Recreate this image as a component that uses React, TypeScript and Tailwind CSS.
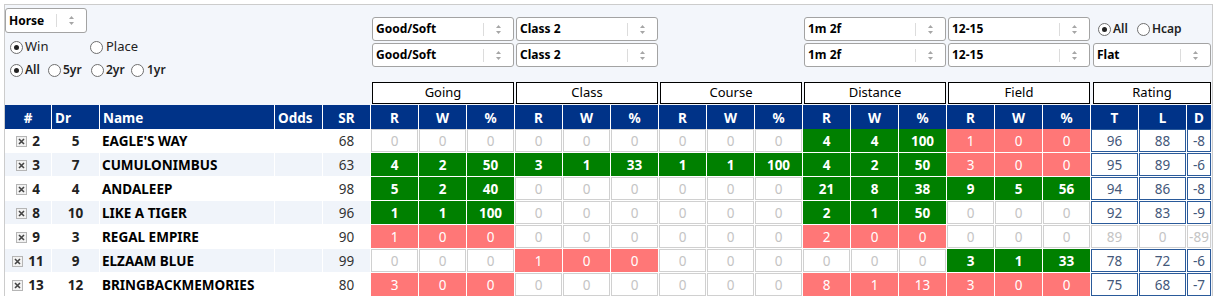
type Stat = [number, number, number];

type Row = {
  n: number;
  dr: number;
  name: string;
  sr: number;
  stats: Stat[];
  t: number;
  l: number;
  d: number;
  dim?: boolean;
};

const rows: Row[] = [
  { n: 2, dr: 5, name: "EAGLE'S WAY", sr: 68, stats: [[0, 0, 0], [0, 0, 0], [0, 0, 0], [4, 4, 100], [1, 0, 0]], t: 96, l: 88, d: -8 },
  { n: 3, dr: 7, name: "CUMULONIMBUS", sr: 63, stats: [[4, 2, 50], [3, 1, 33], [1, 1, 100], [4, 2, 50], [3, 0, 0]], t: 95, l: 89, d: -6 },
  { n: 4, dr: 4, name: "ANDALEEP", sr: 98, stats: [[5, 2, 40], [0, 0, 0], [0, 0, 0], [21, 8, 38], [9, 5, 56]], t: 94, l: 86, d: -8 },
  { n: 8, dr: 10, name: "LIKE A TIGER", sr: 96, stats: [[1, 1, 100], [0, 0, 0], [0, 0, 0], [2, 1, 50], [0, 0, 0]], t: 92, l: 83, d: -9 },
  { n: 9, dr: 3, name: "REGAL EMPIRE", sr: 90, stats: [[1, 0, 0], [0, 0, 0], [0, 0, 0], [2, 0, 0], [0, 0, 0]], t: 89, l: 0, d: -89, dim: true },
  { n: 11, dr: 9, name: "ELZAAM BLUE", sr: 99, stats: [[0, 0, 0], [1, 0, 0], [0, 0, 0], [0, 0, 0], [3, 1, 33]], t: 78, l: 72, d: -6 },
  { n: 13, dr: 12, name: "BRINGBACKMEMORIES", sr: 80, stats: [[3, 0, 0], [0, 0, 0], [0, 0, 0], [8, 1, 13], [3, 0, 0]], t: 75, l: 68, d: -7 },
];

const groups = ["Going", "Class", "Course", "Distance", "Field"];

const Arrows = () => (
  <svg width="7" height="11" viewBox="0 0 7 11">
    <path d="M3.5 1 L6 4 L1 4 Z" fill="#a6a6a6" />
    <path d="M3.5 10 L6 7 L1 7 Z" fill="#a6a6a6" />
  </svg>
);

const Select = ({ value, className = "" }: { value: string; className?: string }) => (
  <div className={`flex items-center rounded-[3px] border border-[#a3a3a3] bg-white ${className}`}>
    <span className="flex-1 pl-[3px] text-[12px] font-bold text-black">{value}</span>
    <span className="h-[13px] w-px bg-[#dcdcdc]" />
    <span className="flex w-[29px] justify-center">
      <Arrows />
    </span>
  </div>
);

const Radio = ({ checked }: { checked?: boolean }) => (
  <span className="inline-flex h-[13px] w-[13px] shrink-0 items-center justify-center rounded-full border border-[#6f6f6f] bg-white">
    {checked && <span className="h-[5px] w-[5px] rounded-full bg-[#222]" />}
  </span>
);

const CheckX = () => (
  <span className="inline-flex h-[11px] w-[11px] items-center justify-center border border-[#b5b5b5] bg-[#f2f2f2]">
    <svg width="7" height="7" viewBox="0 0 7 7">
      <path d="M1 1 L6 6 M6 1 L1 6" stroke="#444" strokeWidth="1.6" />
    </svg>
  </span>
);

const StatCell = ({ value, kind }: { value: number; kind: "zero" | "good" | "bad" }) => {
  if (kind === "good")
    return <div className="flex items-center justify-center bg-[#008000] pt-[2px] font-bold text-white">{value}</div>;
  if (kind === "bad")
    return <div className="flex items-center justify-center bg-[#ff7777] pt-[2px] text-white">{value}</div>;
  return (
    <div className="flex items-center justify-center border border-[#d0d0d0] bg-white pt-[2px] text-[#c4c4c4]">{value}</div>
  );
};

const kindOf = (s: Stat): "zero" | "good" | "bad" => {
  if (s[0] === 0) return "zero";
  return s[2] >= 20 ? "good" : "bad";
};

export default function App() {
  return (
    <div className="ml-1 mt-1 w-[1209px] border-x border-t border-[#cccccc] bg-[#f3f6fb] text-[13px] font-['Noto_Sans',sans-serif] text-[#222]">
      <div className="flex h-[100px]">
        <div className="flex w-[366px] flex-col">
          <Select value="Horse" className="mt-[3px] h-[25px] w-[82px]" />
          <div className="mt-[7px] flex h-[14px] items-center pl-[5px]">
            <span className="flex w-[80px] items-center gap-[2px]">
              <Radio checked />
              <span>Win</span>
            </span>
            <span className="flex items-center gap-[3px]">
              <Radio />
              <span>Place</span>
            </span>
          </div>
          <div className="mt-[9px] flex h-[14px] items-center pl-[5px] text-[12px] font-semibold">
            <span className="flex w-[38px] items-center gap-[2px]">
              <Radio checked />
              <span>All</span>
            </span>
            <span className="flex w-[43px] items-center gap-[2px]">
              <Radio />
              <span>5yr</span>
            </span>
            <span className="flex w-[40px] items-center gap-[2px]">
              <Radio />
              <span>2yr</span>
            </span>
            <span className="flex items-center gap-[3px]">
              <Radio />
              <span>1yr</span>
            </span>
          </div>
        </div>
        <div className="flex flex-1 flex-col pt-[12px]">
          <div className="grid grid-cols-[144px_144px_144px_144px_144px_120px] gap-y-[2px]">
            <Select value="Good/Soft" className="mx-px h-[24px]" />
            <Select value="Class 2" className="mx-px h-[24px]" />
            <div />
            <Select value="1m 2f" className="mx-px h-[24px]" />
            <Select value="12-15" className="mx-px h-[24px]" />
            <div className="flex items-center pl-[7px] text-[12px] font-semibold">
              <span className="flex w-[39px] items-center gap-[2px]">
                <Radio checked />
                <span>All</span>
              </span>
              <span className="flex items-center gap-[2px]">
                <Radio />
                <span>Hcap</span>
              </span>
            </div>
            <Select value="Good/Soft" className="mx-px h-[24px]" />
            <Select value="Class 2" className="mx-px h-[24px]" />
            <div />
            <Select value="1m 2f" className="mx-px h-[24px]" />
            <Select value="12-15" className="mx-px h-[24px]" />
            <Select value="Flat" className="ml-[2px] h-[24px]" />
          </div>
          <div className="mt-[15px] grid grid-cols-[144px_144px_144px_144px_144px_120px]">
            {groups.map((g) => (
              <div key={g} className="mx-px flex h-[22px] items-center justify-center border border-black bg-white text-[13px] text-black">
                {g}
              </div>
            ))}
            <div className="ml-[2px] flex h-[22px] items-center justify-center border border-black bg-white text-[13px] text-black">
              Rating
            </div>
          </div>
        </div>
      </div>

      <div className="grid w-[1206px] grid-cols-[46px_47px_174px_47px_47px_repeat(15,47px)_47px_47px_24px] auto-rows-[23px] gap-px bg-white text-[13.5px]">
        <div className="flex h-[25px] items-center justify-center bg-[#003388] pt-px font-bold text-white">#</div>
        <div className="flex h-[25px] items-center bg-[#003388] pl-[3px] pt-px font-bold text-white">Dr</div>
        <div className="flex h-[25px] items-center bg-[#003388] pl-[3px] pt-px font-bold text-white">Name</div>
        <div className="flex h-[25px] items-center bg-[#003388] pl-[3px] pt-px font-bold text-white">Odds</div>
        <div className="flex h-[25px] items-center justify-center bg-[#003388] pt-px font-bold text-white">SR</div>
        {groups.map((g) =>
          ["R", "W", "%"].map((h) => (
            <div key={g + h} className="flex h-[25px] items-center justify-center bg-[#003388] pt-px font-bold text-white">
              {h}
            </div>
          ))
        )}
        <div className="flex h-[25px] items-center justify-center bg-[#003388] pt-px font-bold text-white">T</div>
        <div className="flex h-[25px] items-center justify-center bg-[#003388] pt-px font-bold text-white">L</div>
        <div className="flex h-[25px] items-center justify-center bg-[#003388] pt-px font-bold text-white">D</div>

        {rows.map((r, i) => {
          const bg = i % 2 === 0 ? "bg-white" : "bg-[#f0f4fa]";
          const rate = r.dim
            ? "border-[#d0d0d0] text-[#c4c4c4]"
            : "border-[#2a5a9a] text-[#44587a]";
          return [
            <div key={`a${i}`} className={`${bg} flex items-center justify-center gap-[5px] pt-[2px] font-bold`}>
              <CheckX />
              <span>{r.n}</span>
            </div>,
            <div key={`b${i}`} className={`${bg} flex items-center justify-center pt-[2px] font-bold`}>{r.dr}</div>,
            <div key={`c${i}`} className={`${bg} flex items-center pl-[2px] pt-[2px] font-bold text-black`}>{r.name}</div>,
            <div key={`d${i}`} className={bg} />,
            <div key={`e${i}`} className={`${bg} flex items-center justify-center pt-[2px] text-[#333]`}>{r.sr}</div>,
            ...r.stats.flatMap((s, gi) =>
              s.map((v, vi) => <StatCell key={`s${i}-${gi}-${vi}`} value={v} kind={kindOf(s)} />)
            ),
            <div key={`t${i}`} className={`flex items-center justify-center border bg-white pt-[2px] ${rate}`}>{r.t}</div>,
            <div key={`l${i}`} className={`flex items-center justify-center border bg-white pt-[2px] ${rate}`}>{r.l}</div>,
            <div key={`x${i}`} className={`flex items-center justify-center overflow-visible whitespace-nowrap border bg-white pt-[2px] ${rate}`}>
              {r.d}
            </div>,
          ];
        })}
      </div>
    </div>
  );
}
